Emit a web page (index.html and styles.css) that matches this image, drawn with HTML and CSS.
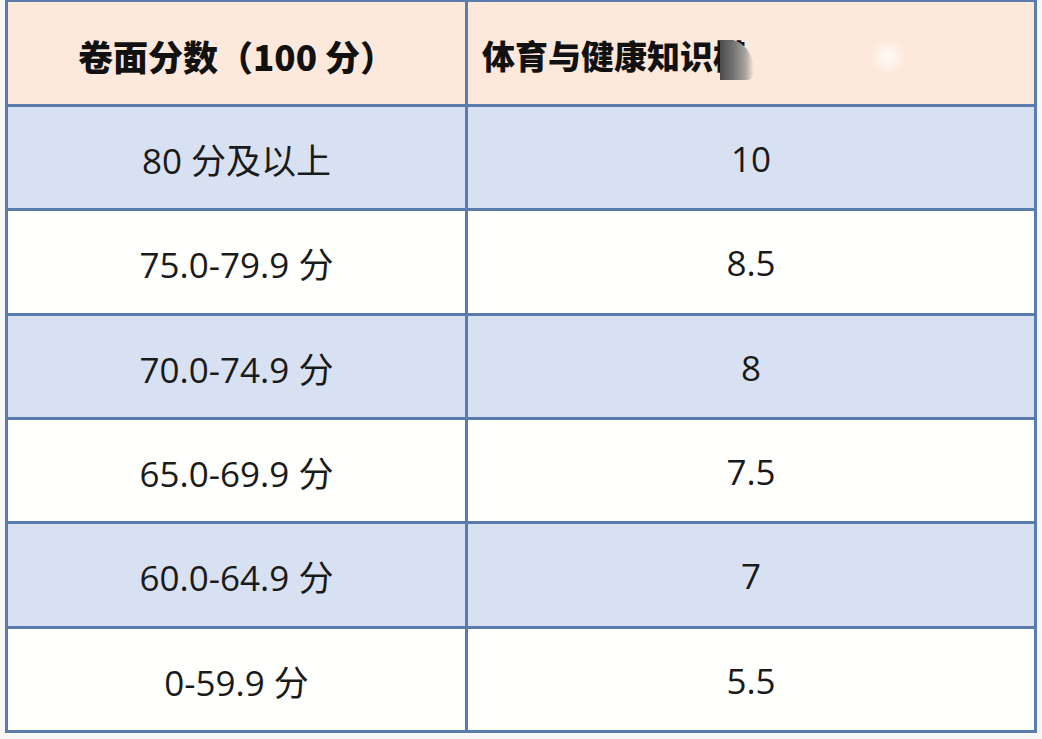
FILE: index.html
```html
<!DOCTYPE html>
<html lang="zh-CN">
<head>
<meta charset="utf-8">
<title>体育与健康知识</title>
<link rel="stylesheet" href="styles.css">
</head>
<body>
<div class="table">
  <div class="cell head">卷面分数（100 分）</div>
  <div class="cell head head-right"><span class="title">体育与健康知识模</span><span class="smudge"></span><span class="glow"></span></div>

  <div class="cell blue">80 分及以上</div>
  <div class="cell blue">10</div>

  <div class="cell white">75.0-79.9 分</div>
  <div class="cell white">8.5</div>

  <div class="cell blue">70.0-74.9 分</div>
  <div class="cell blue">8</div>

  <div class="cell white">65.0-69.9 分</div>
  <div class="cell white">7.5</div>

  <div class="cell blue">60.0-64.9 分</div>
  <div class="cell blue">7</div>

  <div class="cell white">0-59.9 分</div>
  <div class="cell white">5.5</div>
</div>
</body>
</html>
```

FILE: styles.css
```css
html, body {
  margin: 0;
  padding: 0;
  background: #f7f7f8;
}

body {
  width: 1042px;
  height: 739px;
  overflow: hidden;
}

.table {
  margin-left: 5px;
  width: 1032px;
  box-sizing: border-box;
  display: grid;
  grid-template-columns: 457px 566px;
  grid-template-rows: 102px repeat(6, 101.33px);
  column-gap: 3px;
  row-gap: 3px;
  padding: 2px 3px 3px 3px;
  background: #5a7cad;
}

.cell {
  display: flex;
  align-items: center;
  justify-content: center;
  font-family: "Open Sans", "Noto Sans CJK SC", sans-serif;
  font-size: 35px;
  color: #1a1a1a;
  padding-top: 2px;
  box-sizing: border-box;
}

.head {
  background: #fde9db;
  font-family: "Noto Sans CJK SC", sans-serif;
  font-weight: 900;
  font-size: 35px;
  color: #111;
  padding-top: 4px;
}

.head-right {
  justify-content: flex-start;
  padding-left: 14px;
  font-size: 33px;
  position: relative;
}

.smudge {
  position: absolute;
  left: 252px;
  top: 38px;
  width: 34px;
  height: 40px;
  background: linear-gradient(to right, #4b4b4b 0%, #6e6e6e 35%, #a9a4a1 75%, rgba(253,233,219,0) 100%);
  border-radius: 0 70% 20% 0 / 0 80% 20% 0;
}

.glow {
  position: absolute;
  left: 400px;
  top: 40px;
  width: 40px;
  height: 30px;
  background: radial-gradient(circle, rgba(255,255,255,0.8) 0%, rgba(255,255,255,0) 70%);
}

.blue {
  background: #d8e1f1;
}

.white {
  background: #fffffd;
}
```
